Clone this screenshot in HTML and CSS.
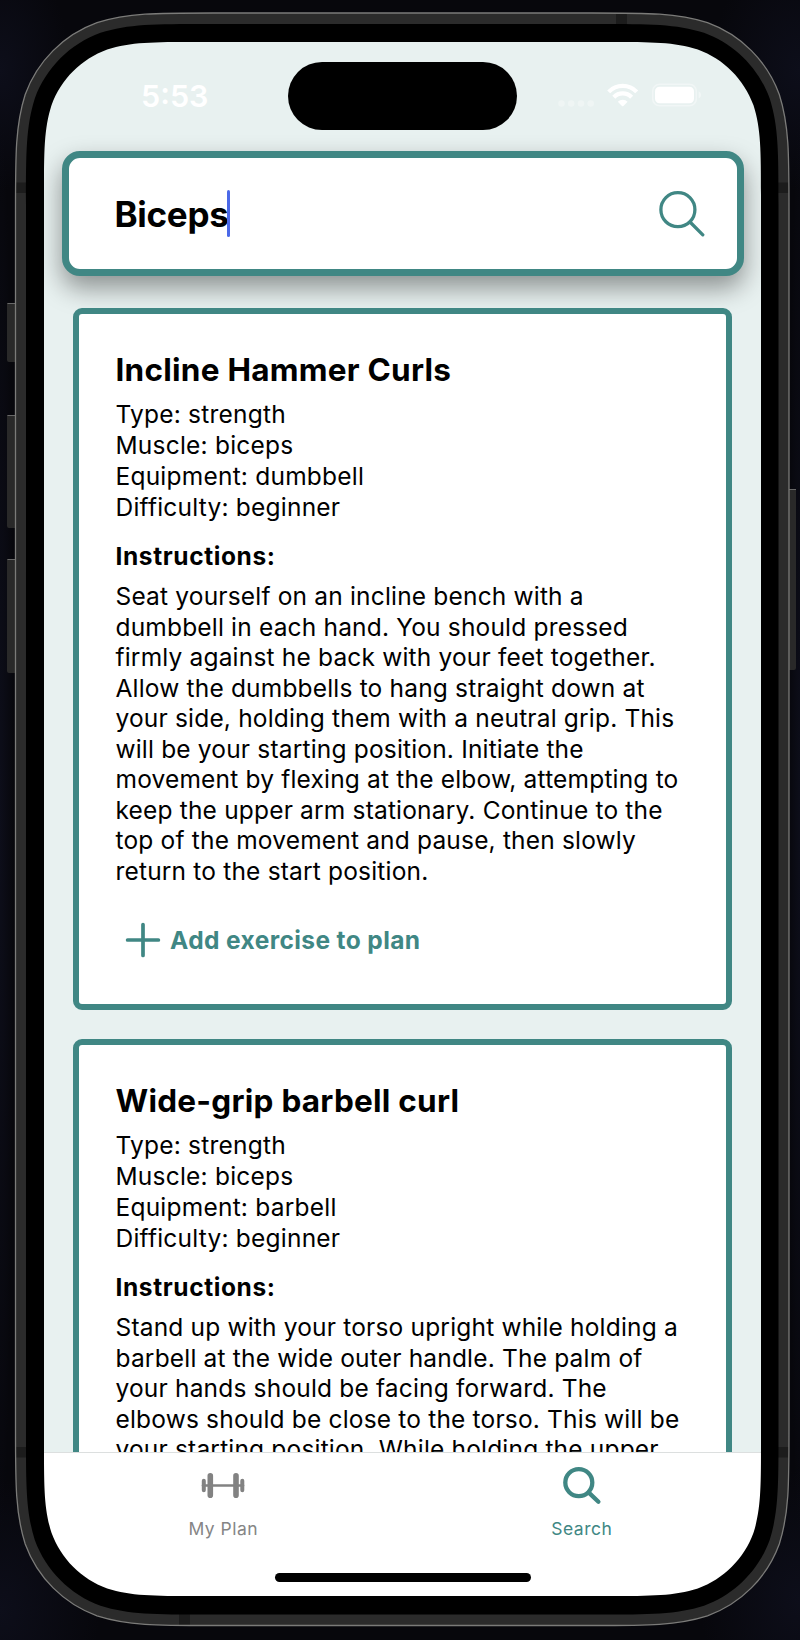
FILE: index.html
```html
<!DOCTYPE html>
<html lang="en">
<head>
<meta charset="utf-8">
<title>Exercise search</title>
<link rel="stylesheet" href="styles.css">
</head>
<body>
<div class="stage">
  <main class="screen">
    <header class="status">
      <span class="time">5:53</span>
      <span class="island"></span>
      <svg class="status-icons" width="146" height="26" viewBox="0 0 146 26">
        <g fill="#fff" fill-opacity=".3"><circle cx="5.5" cy="21.5" r="3.3"/><circle cx="15.2" cy="21.5" r="3.3"/><circle cx="25" cy="21.5" r="3.3"/><circle cx="34.7" cy="21.5" r="3.3"/></g>
        <g fill="none" stroke="#fff" stroke-width="4.2"><path d="M52.7 9.9a19.5 19.5 0 0 1 28 0"/><path d="M57.8 15.2a12.3 12.3 0 0 1 17.8 0"/></g>
        <path fill="#fff" d="M61.8 19.7a7 7 0 0 1 9.8 0l-4.2 4.2q-.7.6-1.4 0z"/>
        <rect x="96.7" y="2.2" width="43.6" height="21.6" rx="7" fill="none" stroke="#fff" stroke-opacity=".4" stroke-width="1.6"/>
        <rect x="99" y="4.7" width="39" height="16.6" rx="4.5" fill="#fff"/>
        <path fill="#fff" fill-opacity=".45" d="M142.7 9.3q2.3 1 2.3 3.6t-2.3 3.6z"/>
      </svg>
    </header>
    <section class="search">
      <span class="query">Biceps</span><span class="caret"></span>
      <svg class="search-icon" width="46" height="46" viewBox="0 0 46 46"><g fill="none" stroke="#408784" stroke-width="3.3" stroke-linecap="round"><circle cx="18.9" cy="18.7" r="17"/><path d="M31.5 31.5 43.8 43.8"/></g></svg>
    </section>
    <section class="results">
      <article class="card">
        <h2 class="name">Incline Hammer Curls</h2>
        <ul class="facts"><li>Type: strength</li><li>Muscle: biceps</li><li>Equipment: dumbbell</li><li>Difficulty: beginner</li></ul>
        <h3 class="label">Instructions:</h3>
        <p class="steps">Seat yourself on an incline bench with a
dumbbell in each hand. You should pressed
firmly against he back with your feet together.
Allow the dumbbells to hang straight down at
your side, holding them with a neutral grip. This
will be your starting position. Initiate the
movement by flexing at the elbow, attempting to
keep the upper arm stationary. Continue to the
top of the movement and pause, then slowly
return to the start position.</p>
        <div class="add"><svg width="36" height="36" viewBox="0 0 36 36"><path d="M18 2.6v30.8M2.6 18h30.8" stroke="#408784" stroke-width="3.7" stroke-linecap="round"/></svg><span>Add exercise to plan</span></div>
      </article>
      <article class="card">
        <h2 class="name">Wide-grip barbell curl</h2>
        <ul class="facts"><li>Type: strength</li><li>Muscle: biceps</li><li>Equipment: barbell</li><li>Difficulty: beginner</li></ul>
        <h3 class="label">Instructions:</h3>
        <p class="steps">Stand up with your torso upright while holding a
barbell at the wide outer handle. The palm of
your hands should be facing forward. The
elbows should be close to the torso. This will be
your starting position. While holding the upper</p>
      </article>
    </section>
    <nav class="tabs">
      <div class="tab"><svg width="46" height="40" viewBox="0 0 46 40"><g stroke="#828282" stroke-linecap="round"><path stroke-width="2.6" d="M3 20.5h40"/><path stroke-width="5.6" d="M10.3 10.8v19.4M36 10.8v19.4"/><path stroke-width="4" d="M3.8 15.7v9.6M42.3 15.7v9.6"/></g></svg><span>My Plan</span></div>
      <div class="tab active"><svg width="46" height="40" viewBox="0 0 46 40"><g fill="none" stroke="#408784" stroke-width="4.3" stroke-linecap="round"><circle cx="19.8" cy="17.6" r="13.5"/><path d="M29.8 27.6 39.4 36.8"/></g></svg><span>Search</span></div>
    </nav>
    <div class="home"></div>
  </main>
  <!-- Phone body drawn around the screen opening -->
  <svg class="frame" width="800" height="1640" viewBox="0 0 800 1640">
    <defs>
      <path id="shell" d="M15.5 210.2c0-56.8 0-85.2 9.7-115.7c12.1-33.4 38.4-59.7 71.8-71.8c30.6-9.7 59-9.7 115.7-9.7H591.8c56.8 0 85.2 0 115.7 9.7c33.4 12.1 59.7 38.4 71.8 71.8c9.7 30.6 9.7 59 9.7 115.7V1428.3c0 56.8 0 85.2-9.7 115.7c-12.1 33.4-38.4 59.7-71.8 71.8c-30.6 9.7-59 9.7-115.7 9.7H212.7c-56.8 0-85.2 0-115.7-9.7c-33.4-12.1-59.7-38.4-71.8-71.8c-9.7-30.6-9.7-59-9.7-115.7z"/>
      <radialGradient id="glow"><stop offset="0" stop-color="#0d0e1a"/><stop offset="1" stop-color="#0d0e1a" stop-opacity="0"/></radialGradient>
      <clipPath id="body"><use href="#shell"/></clipPath>
      <mask id="opening" maskUnits="userSpaceOnUse" x="0" y="0" width="800" height="1640">
        <rect width="800" height="1640" fill="#fff"/>
        <path fill="#000" d="M44 194.9c0-44 0-66 7.5-89.7c9.4-25.9 29.8-46.2 55.700-55.700c23.700-7.500 45.700-7.500 89.700-7.500H608.100c44 0 66 0 89.700 7.500c25.900 9.400 46.200 29.800 55.700 55.700c7.500 23.700 7.500 45.700 7.500 89.700V1443.100c0 44 0 66-7.500 89.700c-9.400 25.900-29.800 46.200-55.700 55.700c-23.700 7.500-45.700 7.500-89.700 7.500H196.900c-44 0-66 0-89.700-7.500c-25.900-9.400-46.200-29.800-55.700-55.700c-7.500-23.700-7.500-45.700-7.500-89.700z"/>
      </mask>
    </defs>
    <g mask="url(#opening)">
      <rect width="800" height="1640" fill="#07070c"/>
      <g fill="url(#glow)"><ellipse cx="0" cy="70" rx="70" ry="120"/><ellipse cx="800" cy="70" rx="90" ry="120"/><ellipse cx="0" cy="1610" rx="100" ry="130"/><ellipse cx="800" cy="1600" rx="100" ry="130"/><rect x="-14" y="100" width="28" height="1450"/><rect x="788" y="100" width="24" height="1450"/></g>
      <path fill="#292929" d="M7 303h9v59H9q-2 0-2-2zM7 415h9v113H9q-2 0-2-2zM7 559h9v114H9q-2 0-2-2zM789 489h7v179q0 2-2 2h-5z"/>
      <path stroke="#686868" d="M7.500 303.500h8M7.500 415.500h8M7.500 559.500h8M789 489.500h7"/>
      <use href="#shell" fill="#2b2b2b"/>
      <path clip-path="url(#body)" fill="#1c1c1c" d="M15 182.500h12v10.500H15zM778 182.500h11v10.500h-11zM616 13h11v12h-11zM15 1447h12v10.500H15zM778 1447h11v10.500h-11zM179 1614h11v11h-11z"/>
      <use href="#shell" fill="none" stroke="#7b7b79" stroke-width="1.3"/>
      <path fill="#000" d="M26 204.400c0-51.900 0-77.900 8.800-105.900c11.100-30.500 35.200-54.600 65.700-65.700c28-8.800 53.900-8.800 105.900-8.800H598.100c51.900 0 77.900 0 105.900 8.800c30.500 11.100 54.600 35.200 65.700 65.700c8.800 28 8.800 53.900 8.800 105.900V1434.100c0 51.900 0 77.900-8.800 105.900c-11.100 30.500-35.200 54.600-65.700 65.700c-28 8.800-53.900 8.800-105.900 8.800H206.400c-51.900 0-77.900 0-105.900-8.800c-30.500-11.100-54.600-35.200-65.700-65.700c-8.800-28-8.800-53.900-8.800-105.900z"/>
    </g>
  </svg>
</div>
</body>
</html>
```

FILE: styles.css
```css
* { box-sizing: border-box; }
body { margin: 0; background: #08080e; font-family: Inter, "Liberation Sans", sans-serif; color: #000; }
.stage { position: relative; width: 800px; height: 1640px; padding: 42px 39px 44px 44px; overflow: hidden; }
.frame { position: absolute; left: 0; top: 0; pointer-events: none; }
.screen { width: 717px; height: 1554px; background: #e8f1f0; display: flex; flex-direction: column; overflow: hidden; position: relative; }
.status { height: 109px; flex: none; display: flex; align-items: flex-start; padding: 20px 0 0 97px; color: #fff; }
.time { width: 147px; font-size: 30.5px; font-weight: 600; line-height: 67px; }
.island { width: 229px; height: 68px; border-radius: 34px; background: #000; }
.status-icons { margin: 20px 0 0 39px; }
.search { flex: none; width: 682px; height: 125px; margin-left: 17.5px; border: 7.5px solid #408784; border-radius: 18px; background: #fff; box-shadow: 0 12px 26px rgba(0,0,0,.4); display: flex; align-items: center; padding: 0 32px 0 46px; }
.query { font-size: 35px; font-weight: 700; letter-spacing: -.3px; }
.caret { width: 3.5px; height: 47px; background: #4b69e8; border-radius: 2px; margin-left: -1.5px; }
.search-icon { margin-left: auto; margin-top: 1px; }
.results { flex: 1; min-height: 0; overflow: hidden; margin-top: -4px; padding: 36px 29px 0; display: flex; flex-direction: column; gap: 29px; }
.card { flex: none; border: 6px solid #408784; border-radius: 9px; background: #fff; padding: 37px 20px 48.5px 36.5px; }
.name, .label, .facts, .steps { margin: 0; padding: 0; list-style: none; }
.name { font-size: 31.5px; line-height: 38px; font-weight: 700; letter-spacing: .25px; }
.facts { font-size: 24.5px; line-height: 31px; margin-top: 9.5px; letter-spacing: .22px; }
.label { font-size: 24.5px; line-height: 31px; font-weight: 700; margin-top: 18px; letter-spacing: .6px; }
.steps { font-size: 24.5px; line-height: 30.5px; margin-top: 9.5px; white-space: pre; letter-spacing: .18px; }
.add { display: flex; align-items: center; height: 31px; margin-top: 38.5px; padding-left: 9px; gap: 9.5px; color: #408784; font-size: 24.5px; font-weight: 700; letter-spacing: .4px; }
.tabs { flex: none; height: 144px; border-top: 1px solid #dcdfdf; background: #fff; display: grid; grid-template-columns: 1fr 1fr; position: relative; }
.tab { display: flex; flex-direction: column; align-items: center; padding-top: 12px; color: #858585; font-size: 17.5px; line-height: 22px; letter-spacing: .5px; gap: 13px; }
.active { color: #408784; }
.home { position: absolute; left: 231px; bottom: 14.5px; width: 255.5px; height: 9px; border-radius: 5px; background: #000; }
```
